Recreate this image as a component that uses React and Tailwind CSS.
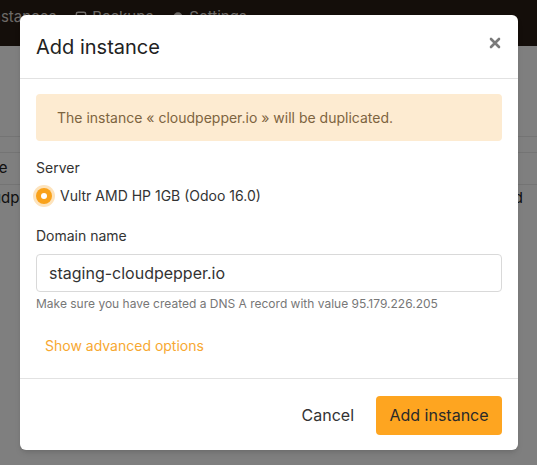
import React from 'react';

const font = { fontFamily: 'Inter, "Noto Sans", sans-serif' };

const Background = () => {
    return (
        <div className="w-full h-full bg-white">
            <div className="h-[46px] bg-[#281c14] flex items-start pt-[6px] text-[15px] text-[#d8d2cc] gap-[18px] -ml-[12px]">
                <span>Instances</span>
                <span className="flex items-center gap-1">
                    <svg width="14" height="14" viewBox="0 0 24 24" fill="none" stroke="currentColor" strokeWidth="2.5">
                        <rect x="4" y="4" width="16" height="16" rx="3" />
                    </svg>
                    Backups
                </span>
                <span className="flex items-center gap-1">
                    <svg width="14" height="14" viewBox="0 0 24 24" fill="currentColor">
                        <circle cx="12" cy="12" r="8" />
                    </svg>
                    Settings
                </span>
            </div>
            <div className="mt-[90px] border-t border-[#e8e8e8]">
                <div className="h-[16px] border-b border-[#e8e8e8]" />
                <div className="h-[32px] border-b border-[#e8e8e8] flex items-center text-[15px] text-[#222] -ml-[34px]">
                    <span>Name</span>
                </div>
                <div className="h-[26px] flex items-center justify-between text-[15px] text-[#222] -ml-[29px] mr-[14px]">
                    <span>cloudpepper.io</span>
                    <span>Failed</span>
                </div>
            </div>
        </div>
    );
};

const Modal = () => {
    return (
        <div className="w-[498px] bg-white rounded-[6px] shadow-md">
            <div className="h-[64px] px-4 flex items-center justify-between border-b border-[#e2e2e2]">
                <h2 className="text-[20px] text-[#222] pt-[1px]">Add instance</h2>
                <svg width="12" height="12" viewBox="0 0 12 12" className="mr-[1px] -mt-[7px]">
                    <path d="M2 2 L10 10 M10 2 L2 10" stroke="#7a7a7a" strokeWidth="2.6" strokeLinecap="round" />
                </svg>
            </div>
            <div className="px-4 pt-[15px] pb-[21px]">
                <div className="h-[47px] rounded-[4px] bg-[#fdebd1] flex items-center px-[21px] text-[14px] text-[#7d6440]">
                    The instance « cloudpepper.io » will be duplicated.
                </div>
                <div className="mt-[16px] text-[14px] leading-[22px] text-[#333]">Server</div>
                <label className="mt-[6px] flex items-center gap-[8px] text-[14px] leading-[22px] text-[#333]">
                    <span className="w-[16px] h-[16px] rounded-full bg-[#f9a21b] ring-[3px] ring-[#fde3bc] flex items-center justify-center">
                        <span className="w-[6px] h-[6px] rounded-full bg-white" />
                    </span>
                    Vultr AMD HP 1GB (Odoo 16.0)
                </label>
                <div className="mt-[18px] text-[14px] leading-[22px] text-[#333]">Domain name</div>
                <div className="mt-[7px] h-[38px] border border-[#d9d9d9] rounded-[4px] flex items-center px-[12px] text-[16px] text-[#333]">
                    staging-cloudpepper.io
                </div>
                <div className="mt-[4px] text-[12px] leading-[16px] text-[#777]">
                    Make sure you have created a DNS A record with value 95.179.226.205
                </div>
                <div className="mt-[23px] pl-[9px] text-[14px] leading-[22px] text-[#f7a831]">
                    Show advanced options
                </div>
            </div>
            <div className="h-[72px] border-t border-[#e2e2e2] flex items-center justify-end gap-[22px] px-4 pt-[1px]">
                <button className="text-[16px] text-[#333]">Cancel</button>
                <button className="h-[39px] w-[126px] rounded-[4px] bg-[#fea520] text-[16px] text-[#2a2a2a]">
                    Add instance
                </button>
            </div>
        </div>
    );
};

const App = () => {
    return (
        <div className="relative w-[537px] h-[465px] overflow-hidden" style={font}>
            <Background />
            <div className="absolute inset-0 bg-black/50 pt-[15px] pl-[20px]">
                <Modal />
            </div>
        </div>
    );
};

export default App;
